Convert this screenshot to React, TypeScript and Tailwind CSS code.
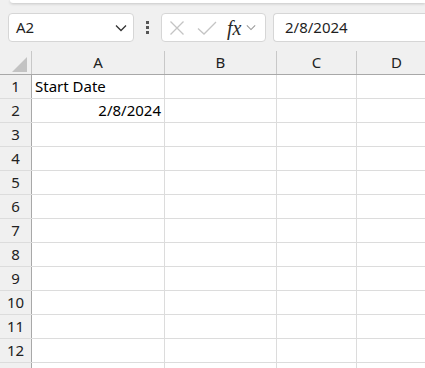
import React from "react";

const COLS = [
  { id: "A", w: 133 },
  { id: "B", w: 112 },
  { id: "C", w: 80 },
  { id: "D", w: 80 },
];

const ROWS = Array.from({ length: 13 }, (_, i) => i + 1);

const cellData: Record<string, { text: string; align: "left" | "right" }> = {
  A1: { text: "Start Date", align: "left" },
  A2: { text: "2/8/2024", align: "right" },
};

const Chevron = ({ className }: { className?: string }) => (
  <svg viewBox="0 0 12 8" className={className} fill="none" stroke="currentColor">
    <path d="M1 1.5 L6 6.5 L11 1.5" strokeWidth="1.3" />
  </svg>
);

const App = () => {
  return (
    <div
      className="h-[368px] w-[425px] overflow-hidden bg-[#f0f0f0] text-[#000]"
      style={{ fontFamily: '"Noto Sans", "Open Sans", sans-serif' }}
    >
      {/* ribbon edge */}
      <div className="ml-[10px] h-[3px] rounded-bl-[6px] bg-white shadow-[0_1px_3px_rgba(0,0,0,0.18)]" />

      {/* formula bar */}
      <div className="mt-[10px] flex h-[29px] items-stretch pl-[8px]">
        <div className="flex w-[126px] items-center justify-between rounded-[4px] border border-[#d6d6d6] bg-white pl-[7px] pr-[6px]">
          <span className="text-[15px] text-[#1f1f1f]">A2</span>
          <Chevron className="h-[8px] w-[12px] text-[#333]" />
        </div>
        <div className="flex w-[27px] flex-col items-center justify-center gap-[2px]">
          <span className="h-[3px] w-[3px] bg-[#555]" />
          <span className="h-[3px] w-[3px] bg-[#555]" />
          <span className="h-[3px] w-[3px] bg-[#555]" />
        </div>
        <div className="flex w-[105px] items-center rounded-[4px] border border-[#d6d6d6] bg-white pl-[7px]">
          <svg viewBox="0 0 16 16" className="h-[16px] w-[16px] text-[#c4c4c4]" stroke="currentColor" fill="none">
            <path d="M1.5 1.5 L14.5 14.5 M14.5 1.5 L1.5 14.5" strokeWidth="1.3" />
          </svg>
          <svg viewBox="0 0 20 16" className="ml-[12px] h-[16px] w-[20px] text-[#c4c4c4]" stroke="currentColor" fill="none">
            <path d="M1 8.5 L7 14 L19 2" strokeWidth="1.3" />
          </svg>
          <span
            className="ml-[10px] text-[20px] italic leading-none text-[#2a2a2a]"
            style={{ fontFamily: '"Liberation Serif", "DejaVu Serif", serif' }}
          >
            fx
          </span>
          <Chevron className="ml-[5px] h-[7px] w-[10px] text-[#9a9a9a]" />
        </div>
        <div className="ml-[7px] -mr-[4px] flex flex-1 items-center rounded-l-[4px] border border-r-0 border-[#d6d6d6] bg-white pl-[11px]">
          <span className="text-[15px] text-[#1f1f1f]">2/8/2024</span>
        </div>
      </div>

      {/* grid */}
      <div className="mt-[9px]">
        <div className="flex h-[24px] border-b border-[#a8a8a8]">
          <div className="relative w-[32px] shrink-0 border-r border-[#c8c8c8]">
            <div className="absolute bottom-[2px] right-[4px] h-0 w-0 border-b-[15px] border-l-[15px] border-b-[#c3c3c3] border-l-transparent" />
          </div>
          {COLS.map((c) => (
            <div
              key={c.id}
              className="flex shrink-0 items-center justify-center border-r border-[#c8c8c8] text-[15px] text-[#222]"
              style={{ width: c.w }}
            >
              {c.id}
            </div>
          ))}
        </div>
        {ROWS.map((r) => (
          <div key={r} className="flex h-[24px] border-b border-[#dcdcdc]">
            <div className="flex w-[32px] shrink-0 items-center justify-center border-r border-[#a8a8a8] bg-[#f0f0f0] text-[15px] text-[#222]">
              {r < 13 ? r : ""}
            </div>
            {COLS.map((c) => {
              const d = cellData[`${c.id}${r}`];
              return (
                <div
                  key={c.id}
                  className={`flex shrink-0 items-center overflow-visible whitespace-nowrap border-r border-[#dcdcdc] bg-white px-[3px] text-[15px] ${
                    d?.align === "right" ? "justify-end" : "justify-start"
                  }`}
                  style={{ width: c.w }}
                >
                  {d?.text}
                </div>
              );
            })}
          </div>
        ))}
      </div>
    </div>
  );
};

export default App;
